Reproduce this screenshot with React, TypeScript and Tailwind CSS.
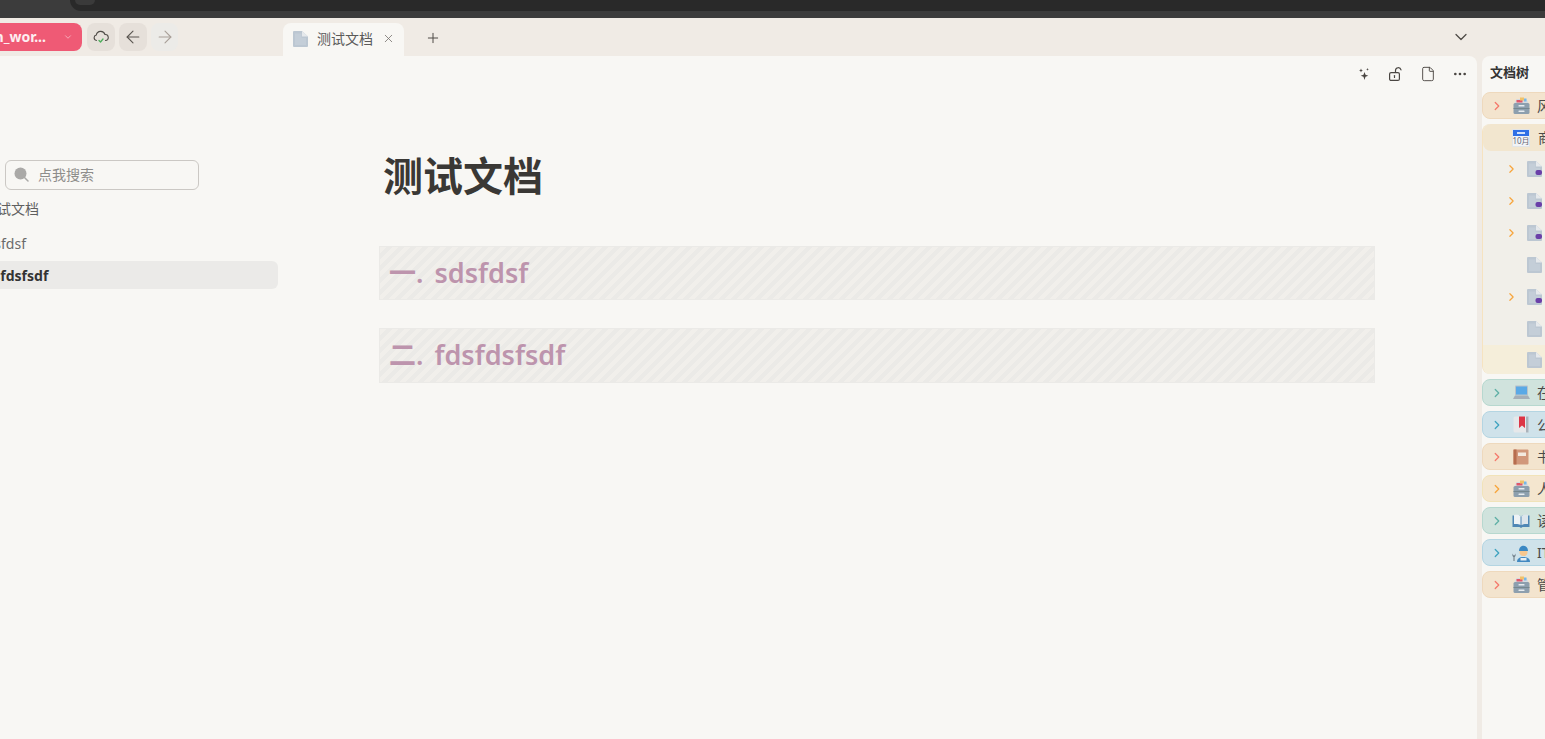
import React from "react";
import { ArrowLeft, ArrowRight, ChevronDown, ChevronRight, Ellipsis, File, Plus, X } from "lucide-react";

const FONT = "font-['Noto_Sans','Noto_Sans_CJK_SC',sans-serif]";

function DocIcon({ dot = false }: { dot?: boolean }) {
  return (
    <svg width="15" height="16" viewBox="0 0 15 16" className="shrink-0">
      <path d="M0 1a1 1 0 0 1 1-1H9L15 5.500V15a1 1 0 0 1-1 1H1a1 1 0 0 1-1-1z" fill="#bcc7d2" />
      <path d="M2 2.500h6.500V7h4.500v7H2z" fill="#c4ced8" />
      <path d="M9 0V5.500H15z" fill="#e6e9ec" />
      {dot && <rect x="8.500" y="9" width="6.500" height="5" rx="2" fill="#6a3fa8" />}
    </svg>
  );
}

function BoxIcon() {
  return (
    <svg width="17" height="17" viewBox="0 0 17 17" className="shrink-0">
      <path d="M1.500 6 L3.500 2h10L15.500 6z" fill="#d5dbe0" />
      <rect x="3.500" y="3" width="6" height="2.500" fill="#e0566a" />
      <rect x="7" y="0.500" width="4" height="3" fill="#f0c26a" />
      <rect x="11" y="1.500" width="2.500" height="3" fill="#78b7e6" />
      <rect x="0.500" y="6" width="16" height="11" rx="1.500" fill="#8d9fae" />
      <rect x="0.500" y="11" width="16" height="1" fill="#75878f" />
      <rect x="5.500" y="8" width="6" height="1.600" rx="0.500" fill="#e6ebef" />
      <rect x="5.500" y="13.500" width="6" height="1.600" rx="0.500" fill="#e6ebef" />
    </svg>
  );
}

function CalendarIcon() {
  return (
    <svg width="18" height="18" viewBox="0 0 18 18" className="shrink-0">
      <rect x="0.500" y="0.500" width="17" height="17" fill="#f2f4f6" stroke="#e2e5e8" />
      <rect x="1" y="1" width="16" height="6" fill="#2f6fe6" />
      <rect x="5" y="3" width="8" height="2" fill="#cfe0fb" />
      <text x="9" y="15" textAnchor="middle" fontSize="8" fill="#667" fontFamily="'Noto Sans','Noto Sans CJK SC',sans-serif">10月</text>
    </svg>
  );
}

function LaptopIcon() {
  return (
    <svg width="17" height="15" viewBox="0 0 17 15" className="shrink-0">
      <rect x="2" y="0.500" width="13" height="10" rx="0.800" fill="#b9c2ca" />
      <rect x="3" y="1.500" width="11" height="8" fill="#5aa9e6" />
      <path d="M2 10.500h13l2 3.500H0z" fill="#a5afb8" />
    </svg>
  );
}

function BookmarkIcon() {
  return (
    <svg width="16" height="17" viewBox="0 0 16 17" className="shrink-0">
      <rect x="0.500" y="0.500" width="15" height="16" rx="1.500" fill="#e6e8ea" />
      <rect x="13" y="0.500" width="2.500" height="16" fill="#aab3bb" />
      <path d="M6 0.500h6V12l-3-2.500L6 12z" fill="#dc3545" />
    </svg>
  );
}

function BookIcon() {
  return (
    <svg width="16" height="16" viewBox="0 0 16 16" className="shrink-0">
      <rect x="0.500" y="0.500" width="15" height="15" rx="1" fill="#d1977b" />
      <rect x="0.500" y="0.500" width="3" height="15" fill="#b76d4e" />
      <rect x="5" y="3.500" width="8" height="3.500" fill="#f3e9df" />
    </svg>
  );
}

function OpenBookIcon() {
  return (
    <svg width="18" height="14" viewBox="0 0 18 14" className="shrink-0">
      <path d="M0.500 1.500h7.500L9 3l1-1.500h7.500V13H10.500L9 14l-1.500-1H0.500z" fill="#4f87b5" />
      <path d="M2 1c2.500-0.500 5-0.300 6.500 1v9c-1.500-1-4-1.300-6.500-1z" fill="#eef3f6" />
      <path d="M16 1c-2.500-0.500-5-0.300-6.500 1v9c1.500-1 4-1.300 6.500-1z" fill="#dde6ec" />
    </svg>
  );
}

function TechIcon() {
  return (
    <svg width="18" height="18" viewBox="0 0 18 18" className="shrink-0">
      <path d="M0.500 9.500l1 2h1l1-2v2.500l-1 1V17h-1v-4l-1-1z" fill="#66757f" />
      <path d="M5 18c0-3 2-5 6.500-5S18 15 18 18z" fill="#4289c1" />
      <circle cx="11.500" cy="8" r="4" fill="#f7c78f" />
      <path d="M7 7c0-7 9-7 9 0z" fill="#3b88c3" />
      <rect x="8.500" y="14" width="6" height="2.500" fill="#e9eef2" />
    </svg>
  );
}

function Outline({ tone, icon, label }: { tone: "orange" | "yellow" | "teal" | "blue"; icon: React.ReactNode; label: string }) {
  const tones = {
    orange: { box: "bg-[#f3e4ce] border-[#eed9bd]", ch: "text-[#f4796b]" },
    yellow: { box: "bg-[#f4e6cf] border-[#f1e3b9]", ch: "text-[#f7a53c]" },
    teal: { box: "bg-[#d0e3dd] border-[#b7d8cf]", ch: "text-[#5fb0a6]" },
    blue: { box: "bg-[#cfe2ea] border-[#b4d5e2]", ch: "text-[#3fa3bf]" },
  }[tone];
  return (
    <div className={`flex h-[27px] w-[120px] items-center rounded-l-[8px] border ${tones.box}`}>
      <ChevronRight size={14} strokeWidth={2.2} className={`ml-[7px] shrink-0 ${tones.ch}`} />
      <div className="ml-[8px] flex w-[18px] shrink-0 justify-center">{icon}</div>
      <span className="ml-[7px] pb-[1px] text-[14px] text-[#4a4a4a]">{label}</span>
    </div>
  );
}

function Child({ arrow, dot, last }: { arrow?: boolean; dot?: boolean; last?: boolean }) {
  return (
    <div className={`flex items-center pl-[22px] ${last ? "h-[29px] rounded-bl-[8px] bg-[#f5eeda]" : "h-[32px]"}`}>
      <div className="flex w-[13px] shrink-0 justify-center">
        {arrow && <ChevronRight size={14} strokeWidth={2.2} className="text-[#f7a53c]" />}
      </div>
      <div className="ml-[9px]">
        <DocIcon dot={dot} />
      </div>
    </div>
  );
}

const stripes = "bg-[repeating-linear-gradient(135deg,#f1efeb_0,#f1efeb_4.25px,#ebeae7_4.25px,#ebeae7_8.5px)]";

export default function App() {
  return (
    <div className={`${FONT} flex h-[739px] w-[1545px] flex-col overflow-hidden bg-[#f0ebe5]`}>
      {/* browser chrome sliver */}
      <div className="h-[18px] shrink-0 bg-[#3c3c3c]">
        <div className="ml-[70px] h-[11px] rounded-bl-[14px] bg-[#292929] pl-[5px]">
          <div className="h-[5px] w-[20px] rounded-b-full bg-[#3a3a3a]" />
        </div>
      </div>

      {/* tab row */}
      <div className="flex h-[38px] shrink-0 items-start">
        <div className="mt-[5px] flex w-[283px] shrink-0 items-center">
          <div className="flex h-[28px] w-[82px] shrink-0 items-center justify-between overflow-hidden rounded-r-[8px] bg-[#ef5a75] pr-[9px]">
            <span className="-ml-[10px] pb-[1px] whitespace-nowrap text-[14px] font-bold text-[#fdeef1]">m_wor...</span>
            <ChevronDown size={10} className="shrink-0 text-[#f7b8c4]" />
          </div>
          <button className="ml-[5px] flex h-[28px] w-[28px] items-center justify-center rounded-[8px] bg-[#e6e0da]">
            <svg width="16" height="14" viewBox="0 0 16 14" fill="none">
              <path d="M3.500 10.500A2.800 2.800 0 0 1 3.300 5 4.500 4.500 0 0 1 12 4.500a3 3 0 0 1 0.500 6" stroke="#4f4b47" strokeWidth="1.100" strokeLinecap="round" />
              <path d="M6 10.500l1.500 1.500 2.500-3" stroke="#4cae5b" strokeWidth="1.300" strokeLinecap="round" strokeLinejoin="round" />
            </svg>
          </button>
          <button className="ml-[4px] flex h-[28px] w-[28px] items-center justify-center rounded-[8px] bg-[#e6e0da]">
            <ArrowLeft size={20} strokeWidth={1.3} className="text-[#5a5550]" />
          </button>
          <button className="ml-[4px] flex h-[28px] w-[27px] items-center justify-center rounded-[8px] bg-[#ecebe8]">
            <ArrowRight size={20} strokeWidth={1.3} className="text-[#a89f98]" />
          </button>
        </div>
        <div className="mt-[5px] flex h-[33px] w-[121px] shrink-0 items-center rounded-t-[8px] bg-[#f8f7f4] pb-[2px] pl-[10px]">
          <DocIcon />
          <span className="ml-[9px] text-[14px] text-[#5a5a5a]">测试文档</span>
          <X size={13} strokeWidth={1.5} className="ml-[9px] text-[#77736f]" />
        </div>
        <Plus size={16} strokeWidth={1.5} className="ml-[21px] mt-[12px] text-[#4f4b47]" />
        <div className="flex-1" />
        <ChevronDown size={20} strokeWidth={1.5} className="mr-[74px] mt-[9px] text-[#4f4b47]" />
      </div>

      {/* body */}
      <div className="flex min-h-0 flex-1">
        <div className="flex w-[1477px] shrink-0 rounded-tr-[8px] bg-[#f8f7f4]">
          {/* outline sidebar */}
          <div className="w-[283px] shrink-0 overflow-hidden pt-[104px]">
            <div className="ml-[5px] flex h-[30px] w-[194px] items-center rounded-[6px] border border-[#cbc8c4] pb-[1px] pl-[8px]">
              <svg width="15" height="15" viewBox="0 0 15 15" className="shrink-0">
                <circle cx="6.500" cy="6.500" r="6" fill="#aaa9a7" />
                <path d="M10.500 10.500L14 14" stroke="#aaa9a7" strokeWidth="1.500" strokeLinecap="round" />
              </svg>
              <span className="ml-[9px] text-[14px] text-[#8e8d8b]">点我搜索</span>
            </div>
            <div className="-ml-[17px] mt-[8px] flex h-[20px] items-center whitespace-nowrap text-[14px] text-[#5f5f5f]">测试文档</div>
            <div className="-ml-[21px] mt-[14px] flex h-[22px] items-center whitespace-nowrap text-[14px] text-[#6a6a6a]">sdsfdsf</div>
            <div className="mt-[7px] flex h-[28px] w-[278px] items-center overflow-hidden rounded-r-[6px] bg-[#ebeae8]">
              <span className="-ml-[21px] whitespace-nowrap text-[14px] font-bold text-[#333]">fdsfdsfsdf</span>
            </div>
          </div>

          {/* document */}
          <div className="min-w-0 flex-1">
            <div className="flex justify-end gap-[16px] pr-[9px] pt-[10px] text-[#4a4642]">
              <svg width="16" height="16" viewBox="0 0 16 16" fill="#4a4642">
                <path d="M8.500 6l1 2.800 2.800 1-2.800 1-1 3.200-1-3.200-2.800-1 2.800-1z" />
                <path d="M5 2.500l.6 1.400 1.400.6-1.400.6L5 6.500l-.6-1.400L3 4.500l1.400-.6z" />
                <path d="M11.500 2l.4 1 1 .4-1 .4-.4 1-.4-1-1-.4 1-.4z" />
              </svg>
              <svg width="16" height="16" viewBox="0 0 16 16" fill="none" stroke="#4a4642" strokeWidth="1.200">
                <rect x="1.600" y="6.600" width="9.800" height="7.800" rx="1.500" />
                <path d="M7.500 6.500V4.500a2.800 2.800 0 0 1 5.500-.7" strokeLinecap="round" />
                <path d="M6.500 9.500v2" strokeLinecap="round" />
              </svg>
              <File size={16} strokeWidth={1.4} />
              <Ellipsis size={16} strokeWidth={2} />
            </div>
            <div className="pl-[96px] pr-[102px]">
              <h1 className="ml-[4px] mt-[58px] h-[72px] text-[40px] font-bold leading-[72px] text-[#3a3835]">测试文档</h1>
              <div className={`mt-[34px] flex h-[54px] items-center border border-[#ebeae7] ${stripes} pl-[9px] text-[27px] font-semibold text-[#bd94ad]`}>
                <span>一.</span>
                <span className="ml-[11px]">sdsfdsf</span>
              </div>
              <div className={`mt-[28px] flex h-[55px] items-center border border-[#ebeae7] ${stripes} pl-[9px] text-[27px] font-semibold text-[#bd94ad]`}>
                <span>二.</span>
                <span className="ml-[11px]">fdsfdsfsdf</span>
              </div>
            </div>
          </div>
        </div>

        <div className="w-[5px] shrink-0" />

        {/* document tree */}
        <div className="min-w-0 flex-1 overflow-hidden rounded-tl-[8px] bg-[#f8f7f4]">
          <div className="flex h-[36px] items-center whitespace-nowrap pb-[2px] pl-[8px] text-[13px] font-bold text-[#333]">文档树</div>
          <div className="flex flex-col gap-[5px]">
            <Outline tone="orange" icon={<BoxIcon />} label="风" />
            <div className="w-[120px] rounded-l-[8px] border-l border-[#f6e3c0] bg-[#f1efe9]">
              <div className="flex h-[27px] items-center rounded-l-[8px] bg-[#f2e6cf] pl-[29px]">
                <CalendarIcon />
                <span className="ml-[8px] text-[14px] text-[#4a4a4a]">商</span>
              </div>
              <div className="pt-[2px]">
                <Child arrow dot />
                <Child arrow dot />
                <Child arrow dot />
                <Child />
                <Child arrow dot />
                <Child />
                <Child last />
              </div>
            </div>
            <Outline tone="teal" icon={<LaptopIcon />} label="在" />
            <Outline tone="blue" icon={<BookmarkIcon />} label="公" />
            <Outline tone="orange" icon={<BookIcon />} label="书" />
            <Outline tone="yellow" icon={<BoxIcon />} label="人" />
            <Outline tone="teal" icon={<OpenBookIcon />} label="读" />
            <Outline tone="blue" icon={<TechIcon />} label="IT" />
            <Outline tone="orange" icon={<BoxIcon />} label="管" />
          </div>
        </div>
      </div>
    </div>
  );
}
